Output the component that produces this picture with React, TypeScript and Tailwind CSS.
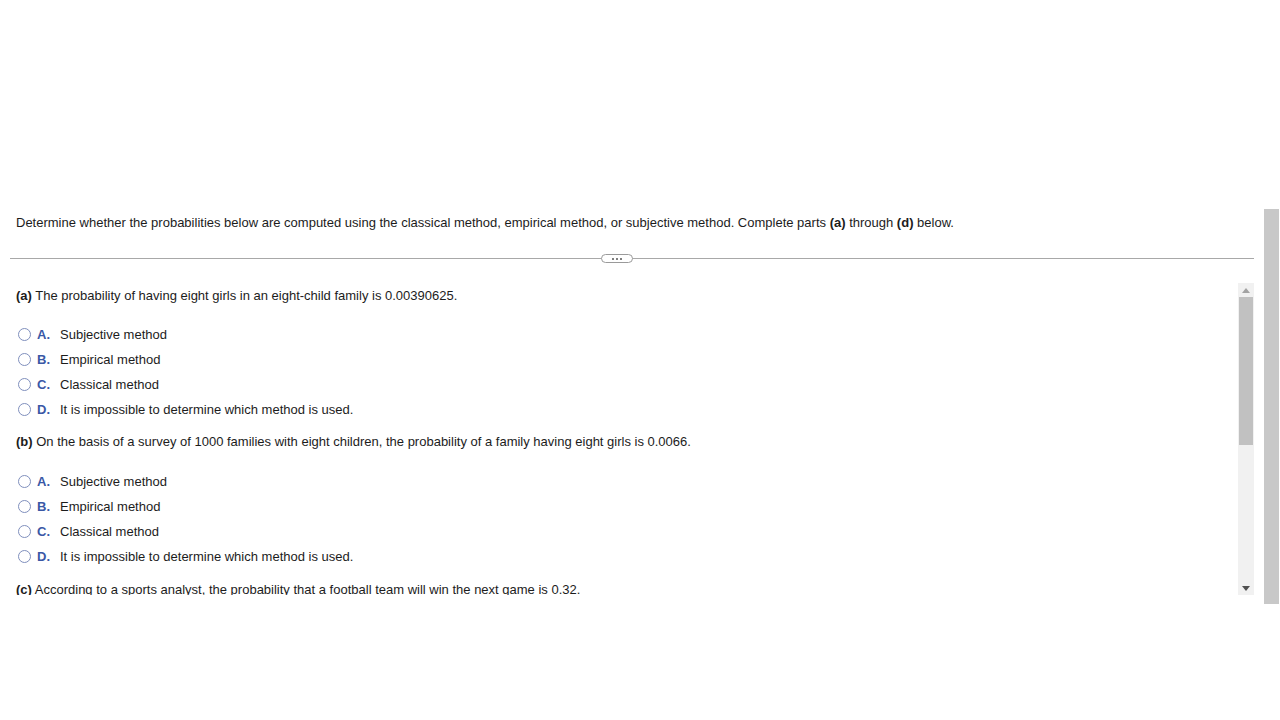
import React from "react";

const options = [
  { l: "A.", t: "Subjective method" },
  { l: "B.", t: "Empirical method" },
  { l: "C.", t: "Classical method" },
  { l: "D.", t: "It is impossible to determine which method is used." },
];

function Radio() {
  return (
    <span className="w-[13px] h-[13px] rounded-full border-[1.5px] border-[#7f8fbd] bg-white inline-block shrink-0" />
  );
}

function Options() {
  return (
    <div className="flex flex-col">
      {options.map((o) => (
        <div key={o.l} className="h-[25px] flex items-center pl-[18px]">
          <Radio />
          <span className="ml-[6px] w-[23px] font-bold text-[#3a58a6]">{o.l}</span>
          <span>{o.t}</span>
        </div>
      ))}
    </div>
  );
}

export default function App() {
  return (
    <div
      className="w-[1280px] h-[720px] bg-white text-[#1c1c1c] text-[13px] overflow-hidden"
      style={{ fontFamily: '"Liberation Sans", Arial, sans-serif' }}
    >
      <div className="h-[209px]" />
      <div className="flex h-[395px]">
        <div className="flex-1 flex flex-col min-w-0">
          <div className="pt-[5px] pl-[16px] h-[18px] leading-[18px] box-content">
            Determine whether the probabilities below are computed using the classical method, empirical method, or subjective method. Complete parts <b>(a)</b> through <b>(d)</b> below.
          </div>
          <div className="relative mt-[26px] ml-[10px] mr-[10px] h-[1px] bg-[#a8a8a8]">
            <div className="absolute left-[591px] top-[-4px] w-[32px] h-[9px] rounded-full border border-[#9a9a9a] bg-white flex items-center justify-center gap-[2px]">
              <span className="w-[2px] h-[2px] rounded-full bg-[#555]" />
              <span className="w-[2px] h-[2px] rounded-full bg-[#555]" />
              <span className="w-[2px] h-[2px] rounded-full bg-[#555]" />
            </div>
          </div>
          <div className="mt-[24px] h-[312px] flex">
            <div className="flex-1 overflow-hidden">
              <div className="pl-[16px] pt-[4px] h-[18px] leading-[18px] box-content mb-[17px]">
                <b>(a)</b> The probability of having eight girls in an eight-child family is 0.00390625.
              </div>
              <Options />
              <div className="pl-[16px] pt-[11px] h-[18px] leading-[18px] box-content mb-[18px]">
                <b>(b)</b> On the basis of a survey of 1000 families with eight children, the probability of a family having eight girls is 0.0066.
              </div>
              <Options />
              <div className="pl-[16px] pt-[12px] h-[18px] leading-[18px] box-content">
                <b>(c)</b> According to a sports analyst, the probability that a football team will win the next game is 0.32.
              </div>
            </div>
            <div className="w-[16px] mr-[10px] bg-[#f1f1f1] flex flex-col">
              <div className="h-[14px] flex items-center justify-center">
                <svg width="8" height="5" viewBox="0 0 8 5"><path d="M0 5 L4 0 L8 5 Z" fill="#a3a3a3" /></svg>
              </div>
              <div className="h-[148px] mx-[1px] bg-[#c1c1c1]" />
              <div className="flex-1" />
              <div className="h-[14px] flex items-center justify-center">
                <svg width="8" height="5" viewBox="0 0 8 5"><path d="M0 0 L4 5 L8 0 Z" fill="#505050" /></svg>
              </div>
            </div>
          </div>
        </div>
        <div className="w-[15px] mr-[1px] bg-[#c8c8c8]" />
      </div>
    </div>
  );
}
